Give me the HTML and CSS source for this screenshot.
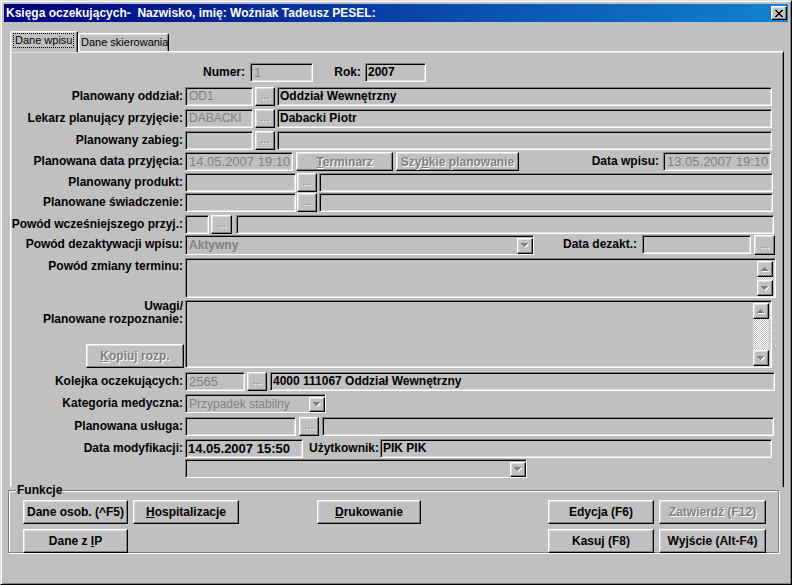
FILE: index.html
```html
<!DOCTYPE html>
<html lang="pl">
<head>
<meta charset="utf-8">
<title>Księga oczekujących</title>
<link rel="stylesheet" href="styles.css">
</head>
<body>
<svg class="defs" width="0" height="0" aria-hidden="true">
  <symbol id="dn" viewBox="0 0 8 5"><path fill="#fff" d="M1 1h7v1H1zM2 2h5v1H2zM3 3h3v1H3zM4 4h1v1H4z"/><path fill="#808080" d="M0 0h7v1H0zM1 1h5v1H1zM2 2h3v1H2zM3 3h1v1H3z"/></symbol>
  <symbol id="up" viewBox="0 0 8 5"><path fill="#fff" d="M4 1h1v1H4zM3 2h3v1H3zM2 3h5v1H2zM1 4h7v1H1z"/><path fill="#808080" d="M3 0h1v1H3zM2 1h3v1H2zM1 2h5v1H1zM0 3h7v1H0z"/></symbol>
</svg>
<div class="window">
  <div class="titlebar">
    <span class="title">Księga oczekujących-  Nazwisko, imię: Woźniak Tadeusz PESEL:</span>
    <span class="close"><svg width="8" height="7" viewBox="0 0 8 7" shape-rendering="crispEdges"><path fill="#000" d="M0 0h2v1H0zM6 0h2v1H6zM1 1h2v1H1zM5 1h2v1H5zM2 2h4v1H2zM3 3h2v1H3zM2 4h4v1H2zM1 5h2v1H1zM5 5h2v1H5zM0 6h2v1H0zM6 6h2v1H6z"/></svg></span>
  </div>

  <div class="tabs">
    <div class="tab active"><span class="focus">Dane wpisu</span></div>
    <div class="tab other">Dane skierowania</div>
  </div>

  <div class="panel">
    <div class="row h24">
      <span class="lbl lbl-numer">Numer:</span>
      <div class="edit ro num f-numer">1</div>
      <span class="lbl lbl-rok">Rok:</span>
      <div class="edit val f-rok">2007</div>
    </div>

    <div class="row h22">
      <span class="lbl">Planowany oddział:</span>
      <div class="edit ro f-code">OD1</div>
      <div class="dots m2 w20">...</div>
      <div class="edit val m2 f-name">Oddział Wewnętrzny</div>
    </div>

    <div class="row h22">
      <span class="lbl">Lekarz planujący przyjęcie:</span>
      <div class="edit ro f-code">DABACKI</div>
      <div class="dots m2 w20">...</div>
      <div class="edit val m2 f-name">Dabacki Piotr</div>
    </div>

    <div class="row h21">
      <span class="lbl">Planowany zabieg:</span>
      <div class="edit f-code"></div>
      <div class="dots m2 w20">...</div>
      <div class="edit m2 f-name"></div>
    </div>

    <div class="row h21">
      <span class="lbl">Planowana data przyjęcia:</span>
      <div class="edit ro num f-date">14.05.2007 19:10</div>
      <div class="btn dis b-term"><span><u>T</u>erminarz</span></div>
      <div class="btn dis b-szyb"><span>Szy<u>b</u>kie planowanie</span></div>
      <span class="lbl lbl-wpis">Data wpisu:</span>
      <div class="edit ro num f-date">13.05.2007 19:10</div>
    </div>

    <div class="row h20">
      <span class="lbl">Planowany produkt:</span>
      <div class="edit f-prod"></div>
      <div class="dots m1 w20">...</div>
      <div class="edit m2 f-prod2"></div>
    </div>

    <div class="row h22">
      <span class="lbl">Planowane świadczenie:</span>
      <div class="edit f-prod"></div>
      <div class="dots m1 w20">...</div>
      <div class="edit m2 f-prod2"></div>
    </div>

    <div class="row h20">
      <span class="lbl">Powód wcześniejszego przyj.:</span>
      <div class="edit f-wcz"></div>
      <div class="dots m2 w21">...</div>
      <div class="edit m4 f-wcz2"></div>
    </div>

    <div class="row h23">
      <span class="lbl">Powód dezaktywacji wpisu:</span>
      <div class="combo c-dez">
        <span class="combo-text ro-bold">Aktywny</span>
        <span class="combo-btn"><svg class="arr" width="8" height="5"><use href="#dn"/></svg></span>
      </div>
      <span class="lbl lbl-dez">Data dezakt.:</span>
      <div class="edit f-dez"></div>
      <div class="dots m3 w21 h20b">...</div>
    </div>

    <div class="row h42">
      <span class="lbl lbl-top">Powód zmiany terminu:</span>
      <div class="memo m-1">
        <div class="memo-text"></div>
        <div class="vscroll">
          <span class="sbtn"><svg class="arr" width="8" height="5"><use href="#up"/></svg></span>
          <span class="track"></span>
          <span class="sbtn"><svg class="arr" width="8" height="5"><use href="#dn"/></svg></span>
        </div>
      </div>
    </div>

    <div class="row h72">
      <div class="lbl-col">
        <span class="lbl-lines">Uwagi/<br>Planowane rozpoznanie:</span>
        <div class="btn dis b-kop"><span><u>K</u>opiuj rozp.</span></div>
      </div>
      <div class="memo m-2">
        <div class="memo-text"></div>
        <div class="vscroll">
          <span class="sbtn"><svg class="arr" width="8" height="5"><use href="#up"/></svg></span>
          <span class="track"></span>
          <span class="sbtn"><svg class="arr" width="8" height="5"><use href="#dn"/></svg></span>
        </div>
      </div>
    </div>

    <div class="row h22">
      <span class="lbl">Kolejka oczekujących:</span>
      <div class="edit ro num f-kol">2565</div>
      <div class="dots m2 w20">...</div>
      <div class="edit val m3 f-kol2">4000 111067 Oddział Wewnętrzny</div>
    </div>

    <div class="row h23">
      <span class="lbl">Kategoria medyczna:</span>
      <div class="combo c-kat">
        <span class="combo-text ro">Przypadek stabilny</span>
        <span class="combo-btn"><svg class="arr" width="8" height="5"><use href="#dn"/></svg></span>
      </div>
    </div>

    <div class="row h22">
      <span class="lbl">Planowana usługa:</span>
      <div class="edit f-us"></div>
      <div class="dots m3 w20">...</div>
      <div class="edit m3 f-us2"></div>
    </div>

    <div class="row h20">
      <span class="lbl">Data modyfikacji:</span>
      <div class="edit dateval f-mod">14.05.2007 15:50</div>
      <span class="lbl lbl-uz">Użytkownik:</span>
      <div class="edit val f-uz">PIK PIK</div>
    </div>

    <div class="row h20">
      <div class="combo c-last">
        <span class="combo-text"></span>
        <span class="combo-btn"><svg class="arr" width="8" height="5"><use href="#dn"/></svg></span>
      </div>
    </div>
  </div>

  <div class="group">
    <span class="legend">Funkcje</span>
    <div class="brow">
      <div class="btn b-osob"><span>Dane osob. (^F5)</span></div>
      <div class="btn b-hosp"><span><u>H</u>ospitalizacje</span></div>
      <div class="btn b-druk"><span><u>D</u>rukowanie</span></div>
      <div class="btn b-edy"><span>Edycja (F6)</span></div>
      <div class="btn dis b-zat"><span>Zatwierdź (F12)</span></div>
    </div>
    <div class="brow">
      <div class="btn b-osob"><span>Dane z <u>I</u>P</span></div>
      <div class="btn b-kas"><span>Kasuj (F8)</span></div>
      <div class="btn b-zat"><span>Wyjście (Alt-F4)</span></div>
    </div>
  </div>
</div>
</body>
</html>
```

FILE: styles.css
```css
* { box-sizing: border-box; }

body {
  margin: 0;
  background: #c0c0c0;
  font-family: "Liberation Sans", Arial, sans-serif;
  font-size: 12px;
  color: #000;
}

.defs { display: block; width: 0; height: 0; overflow: hidden; }

.window {
  width: 792px;
  height: 585px;
  background: #c0c0c0;
  border: 1px solid;
  border-color: #dfdfdf #000 #000 #dfdfdf;
  box-shadow: inset 1px 1px #fff, inset -1px -1px #808080;
  padding: 3px;
}

/* ---------- title bar ---------- */
.titlebar {
  height: 18px;
  display: flex;
  align-items: center;
  background: linear-gradient(to right, #000080, #1084d0);
  color: #fff;
  font-weight: bold;
  font-size: 12px;
  padding-left: 2px;
}
.title { flex: 1; white-space: pre; }
.close {
  width: 16px;
  height: 14px;
  margin-right: 1px;
  background: #c0c0c0;
  border: 1px solid;
  border-color: #fff #000 #000 #fff;
  box-shadow: inset -1px -1px #808080, inset 1px 1px #dfdfdf;
  display: flex;
  align-items: center;
  justify-content: center;
}

/* ---------- tabs ---------- */
.tabs {
  display: flex;
  align-items: flex-end;
  margin: 9px 0 0 6px;
  height: 20px;
  position: relative;
  z-index: 1;
}
.tab {
  height: 18px;
  border: 1px solid;
  border-bottom: none;
  border-color: #fff #000 transparent #fff;
  box-shadow: inset -1px 0 #808080, inset 1px 1px #dfdfdf;
  border-radius: 2px 2px 0 0;
  font-size: 11px;
  line-height: 16px;
  background: #c0c0c0;
  white-space: nowrap;
}
.tab.active {
  width: 68px;
  height: 21px;
  margin-bottom: -1px;
  padding: 2px 0 0 3px;
  line-height: 13px;
}
.tab.other { width: 91px; padding-left: 2px; }
.focus {
  display: inline-block;
  outline: 1px dotted #000;
  padding: 0 1px;
  line-height: 13px;
}

/* ---------- panel ---------- */
.panel {
  margin-left: 6px;
  width: 774px;
  height: 436px;
  border-top: 1px solid #fff;
  border-left: 1px solid #fff;
  border-right: 1px solid #000;
  box-shadow: inset 1px 1px #dfdfdf, inset -1px 0 #808080;
  padding: 11px 0 0 1px;
}

.row { display: flex; align-items: flex-start; }
.h20 { height: 20px; }
.h21 { height: 21px; }
.h22 { height: 22px; }
.h23 { height: 23px; }
.h24 { height: 24px; }
.h42 { height: 42px; }
.h72 { height: 72px; }

.lbl {
  flex: none;
  display: flex;
  justify-content: flex-end;
  width: 171px;
  margin-right: 2px;
  line-height: 19px;
  font-weight: bold;
  white-space: nowrap;
}
.lbl-top { line-height: 17px; }
.lbl-numer { width: 233px; margin-right: 5px; }
.lbl-rok { width: 48px; margin-right: 4px; }
.lbl-wpis { width: 140px; margin-right: 4px; }
.lbl-dez { width: 103px; margin-right: 5px; }
.lbl-uz { width: 76px; margin-right: 1px; }

.lbl-col {
  flex: none;
  width: 173px;
  height: 68px;
  display: flex;
  flex-direction: column;
  justify-content: space-between;
  align-items: flex-end;
}
.lbl-lines {
  font-weight: bold;
  text-align: right;
  line-height: 13px;
  padding-right: 2px;
  white-space: nowrap;
}

/* ---------- edits ---------- */
.edit {
  flex: none;
  height: 19px;
  border: 1px solid;
  border-color: #808080 #fff #fff #808080;
  box-shadow: inset 1px 1px #000, inset -1px -1px #dfdfdf;
  background: #c0c0c0;
  padding-left: 3px;
  line-height: 17px;
  white-space: nowrap;
  overflow: hidden;
}
.ro { color: #808080; font-size: 12px; }
.ro-bold { color: #808080; font-weight: bold; }
.num { font-size: 13px; }
.val { font-weight: bold; padding-left: 2px; }
.dateval { font-size: 13px; font-weight: bold; padding-left: 2px; }

.m1 { margin-left: 1px; }
.m2 { margin-left: 2px; }
.m3 { margin-left: 3px; }
.m4 { margin-left: 4px; }

.f-numer { width: 63px; }
.f-rok { width: 61px; }
.f-code { width: 68px; }
.f-name { width: 495px; }
.f-date { width: 108px; }
.f-prod { width: 111px; }
.f-prod2 { width: 454px; }
.f-wcz { width: 24px; }
.f-wcz2 { width: 538px; }
.f-dez { width: 109px; }
.f-kol { width: 60px; }
.f-kol2 { width: 505px; }
.f-us { width: 111px; }
.f-us2 { width: 452px; }
.f-mod { width: 118px; }
.f-uz { width: 392px; }

/* ---------- buttons ---------- */
.btn, .dots, .sbtn, .combo-btn {
  flex: none;
  background: #c0c0c0;
  border: 1px solid;
  border-color: #fff #000 #000 #fff;
  box-shadow: inset -1px -1px #808080, inset 1px 1px #dfdfdf;
  display: flex;
  align-items: center;
  justify-content: center;
  font-weight: bold;
  white-space: nowrap;
}
.dots {
  height: 19px;
  color: #808080;
  text-shadow: 1px 1px #fff;
  font-weight: normal;
  font-size: 11px;
  line-height: 15px;
  align-items: flex-end;
  padding-bottom: 2px;
}
.w20 { width: 20px; }
.w21 { width: 21px; }
.h20b { height: 20px; }

.btn { height: 24px; }
.dis { color: #808080; text-shadow: 1px 1px #fff; }
.b-term { height: 19px; width: 97px; margin-left: 3px; }
.b-szyb { height: 19px; width: 123px; margin-left: 3px; }
.b-kop { width: 98px; margin-right: 1px; }

/* ---------- combos ---------- */
.combo {
  flex: none;
  height: 19px;
  display: flex;
  align-items: center;
  border: 1px solid;
  border-color: #808080 #fff #fff #808080;
  box-shadow: inset 1px 1px #000;
  background: #c0c0c0;
}
.combo-text {
  flex: 1;
  padding-left: 3px;
  white-space: nowrap;
  overflow: hidden;
}
.combo-btn { width: 16px; height: 15px; margin-top: 1px; }
.c-dez { width: 349px; height: 20px; }
.c-dez .combo-btn { height: 16px; }
.c-kat { width: 141px; }
.c-last { width: 342px; margin-left: 173px; }

.arr { display: block; }

/* ---------- memos ---------- */
.memo {
  flex: none;
  display: flex;
  border: 1px solid;
  border-color: #808080 #fff #fff #808080;
  box-shadow: inset 1px 1px #000, inset -1px -1px #dfdfdf;
  background: #c0c0c0;
  padding: 2px 2px 1px 1px;
}
.m-1 { width: 591px; height: 40px; }
.m-2 { width: 587px; height: 68px; }
.memo-text { flex: 1; }
.vscroll {
  width: 16px;
  display: flex;
  flex-direction: column;
}
.sbtn { width: 16px; height: 16px; }
.track {
  flex: 1;
  background: repeating-conic-gradient(#fff 0 25%, #c0c0c0 0 50%) 0 0 / 2px 2px;
}

/* ---------- group box ---------- */
.group {
  position: relative;
  margin: 3px 0 0 4px;
  width: 771px;
  height: 63px;
  border: 1px solid #808080;
  box-shadow: inset 1px 1px #fff, 1px 1px #fff;
  padding: 9px 0 0 14px;
}
.legend {
  position: absolute;
  left: 7px;
  top: -8px;
  padding: 0 1px;
  background: #c0c0c0;
  font-weight: bold;
  line-height: 14px;
}
.brow { display: flex; height: 24px; margin-bottom: 5px; }
.b-osob { width: 105px; }
.b-hosp { width: 106px; margin-left: 5px; }
.b-druk { width: 104px; margin-left: 78px; }
.b-edy { width: 106px; margin-left: 127px; }
.b-kas { width: 106px; margin-left: 420px; }
.b-zat { width: 107px; margin-left: 5px; }
```
